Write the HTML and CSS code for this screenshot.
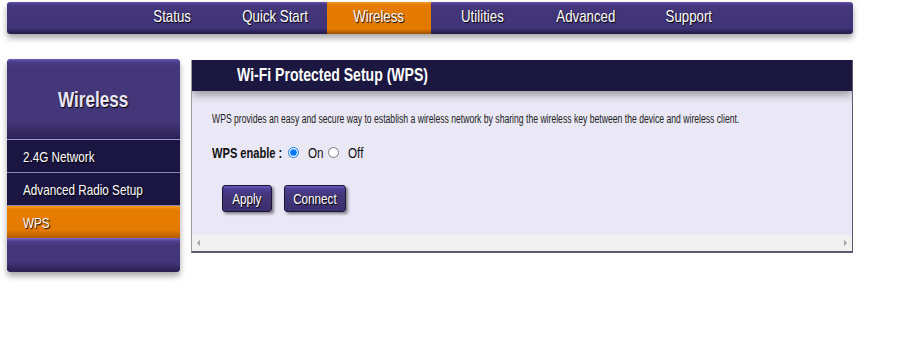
FILE: index.html
```html
<!DOCTYPE html>
<html>
<head>
<meta charset="utf-8">
<link rel="stylesheet" href="styles.css">
</head>
<body>
<nav class="topnav">
  <a class="tab"><span class="t">Status</span></a>
  <a class="tab"><span class="t">Quick Start</span></a>
  <a class="tab active"><span class="t">Wireless</span></a>
  <a class="tab"><span class="t">Utilities</span></a>
  <a class="tab"><span class="t">Advanced</span></a>
  <a class="tab"><span class="t">Support</span></a>
</nav>
<div class="layout">
  <aside class="sidebar">
    <div class="side-title"><span class="t">Wireless</span></div>
    <a class="side-item"><span class="t">2.4G Network</span></a>
    <a class="side-item"><span class="t">Advanced Radio Setup</span></a>
    <a class="side-item current"><span class="t">WPS</span></a>
    <div class="side-foot"></div>
  </aside>
  <section class="panel">
    <header class="panel-head"><span class="t">Wi-Fi Protected Setup (WPS)</span></header>
    <div class="panel-body">
      <p class="desc"><span class="t">WPS provides an easy and secure way to establish a wireless network by sharing the wireless key between the device and wireless client.</span></p>
      <div class="row">
        <span class="label"><span class="t">WPS enable :</span></span>
        <label class="opt"><input type="radio" name="wps" checked><span class="olab"><span class="t">On</span></span></label>
        <label class="opt"><input type="radio" name="wps"><span class="olab"><span class="t">Off</span></span></label>
      </div>
      <div class="btns">
        <button class="btn apply"><span class="t">Apply</span></button>
        <button class="btn connect"><span class="t">Connect</span></button>
      </div>
    </div>
    <div class="hscroll"><span class="arr left"></span><span class="arr right"></span></div>
  </section>
</div>
</body>
</html>
```
FILE: styles.css
```css
* { box-sizing: border-box; }
body {
  margin: 0;
  background: #fff;
  font-family: "Liberation Sans", Arial, sans-serif;
  width: 904px;
  height: 343px;
  overflow: hidden;
}
.t {
  display: inline-block;
  transform: scaleX(0.78);
  white-space: nowrap;
}
.topnav {
  margin: 2px 0 0 7px;
  width: 846px;
  height: 32px;
  border-radius: 3px;
  background: linear-gradient(#6657b0 0, #4a3c88 2px, #433679 5px, #40347a 26px, #2b2155 30px, #231a46 32px);
  box-shadow: 0 4px 6px rgba(0,0,0,0.35);
  display: flex;
  padding-left: 113px;
}
.tab {
  width: 103.5px;
  height: 32px;
  display: flex;
  align-items: center;
  justify-content: center;
  color: #fff;
  font-size: 17px;
  text-shadow: 1px 1px 1px #000;
  padding-bottom: 2px;
}
.tab .t { transform-origin: center; }
.tab.active {
  background: linear-gradient(#f09a2a 0, #e47b00 3px, #e47b00 27px, #b85f00 30px, #9c4e00 32px);
}
.layout {
  display: flex;
  align-items: flex-start;
  padding-left: 7px;
  margin-top: 25px;
}
.sidebar {
  width: 173px;
  height: 213px;
  border-radius: 4px;
  overflow: hidden;
  display: flex;
  flex-direction: column;
  background: #433679;
  box-shadow: 0 4px 6px rgba(0,0,0,0.35);
}
.side-title {
  height: 81px;
  background: linear-gradient(#6e60c0 0, #4a3c88 3px, #433679 8px, #433679 62px, #2a2052 81px);
  display: flex;
  align-items: center;
  justify-content: center;
  color: #e9e6f7;
  font-weight: bold;
  font-size: 22px;
  text-shadow: 1px 1px 1px #000;
  border-bottom: 1px solid #9e96cc;
  padding-top: 2px;
}
.side-title .t { transform-origin: center; }
.side-item {
  height: 33px;
  background: #1b1541;
  color: #fff;
  font-size: 15px;
  display: flex;
  align-items: center;
  padding-left: 16px;
  border-bottom: 1px solid #8a82b8;
  text-shadow: 1px 1px 1px #000;
}
.side-item .t { transform-origin: left center; }
.side-item.current {
  height: 32px;
  background: linear-gradient(#f29b20 0, #e77d00 4px, #e47b00 24px, #b35c00 32px);
  border-bottom: none;
}
.side-foot {
  flex: 1;
  background: linear-gradient(#7a6cd0 0, #4e4090 3px, #433679 8px, #433679 24px, #2b2155 33px);
}
.panel {
  margin-left: 11px;
  margin-top: 1px;
  width: 662px;
  height: 193px;
  display: flex;
  flex-direction: column;
  border-left: 1px solid #9a9a9a;
  border-right: 1px solid #5a5870;
  border-bottom: 2px solid #5a5870;
  background: #eae8f6;
  overflow: hidden;
}
.panel-head {
  height: 31px;
  flex: none;
  background: #1c1740;
  color: #fff;
  font-weight: bold;
  font-size: 18px;
  display: flex;
  align-items: center;
  padding-left: 45px;
  box-shadow: 0 4px 8px rgba(0,0,0,0.35);
  position: relative;
}
.panel-head .t { transform-origin: left center; }
.panel-body {
  flex: 1;
  padding: 21px 0 0 20px;
  overflow: hidden;
}
.desc {
  margin: 0;
  font-size: 12.5px;
  color: #222;
  height: 14px;
  line-height: 14px;
  overflow: hidden;
  width: 620px;
}
.desc .t { transform: scaleX(0.69); transform-origin: left center; }
.row {
  margin-top: 17px;
  height: 18px;
  display: flex;
  align-items: center;
  font-size: 15px;
  color: #111;
}
.label { font-weight: bold; width: 72px; }
.label .t { transform: scaleX(0.74); transform-origin: left center; }
.opt { display: flex; align-items: center; }
.opt input {
  margin: 0 9px 0 4px;
  width: 11px;
  height: 11px;
}
.olab { width: 16px; display: inline-block; }
.olab .t { transform-origin: left center; }
.btns {
  display: flex;
  gap: 12px;
  margin-top: 24px;
  padding-left: 10px;
}
.btn {
  height: 27px;
  border: 1px solid #1a1533;
  border-radius: 3px;
  background: linear-gradient(#6b5cc0 0, #4c3e92 3px, #433679 10px, #3a2e6c 27px);
  color: #fff;
  font-family: "Liberation Sans", Arial, sans-serif;
  font-size: 15px;
  padding: 0;
  text-shadow: 1px 1px 1px #000;
  box-shadow: 2px 2px 3px rgba(0,0,0,0.45);
}
.btn .t { transform-origin: center; }
.apply { width: 50px; }
.connect { width: 62px; }
.hscroll {
  height: 16px;
  flex: none;
  background: #f0f0f0;
  position: relative;
}
.arr {
  position: absolute;
  top: 5px;
  width: 0; height: 0;
  border-top: 3px solid transparent;
  border-bottom: 3px solid transparent;
}
.arr.left { left: 5px; border-right: 3px solid #a0a0a0; }
.arr.right { right: 5px; border-left: 3px solid #a0a0a0; }
```
